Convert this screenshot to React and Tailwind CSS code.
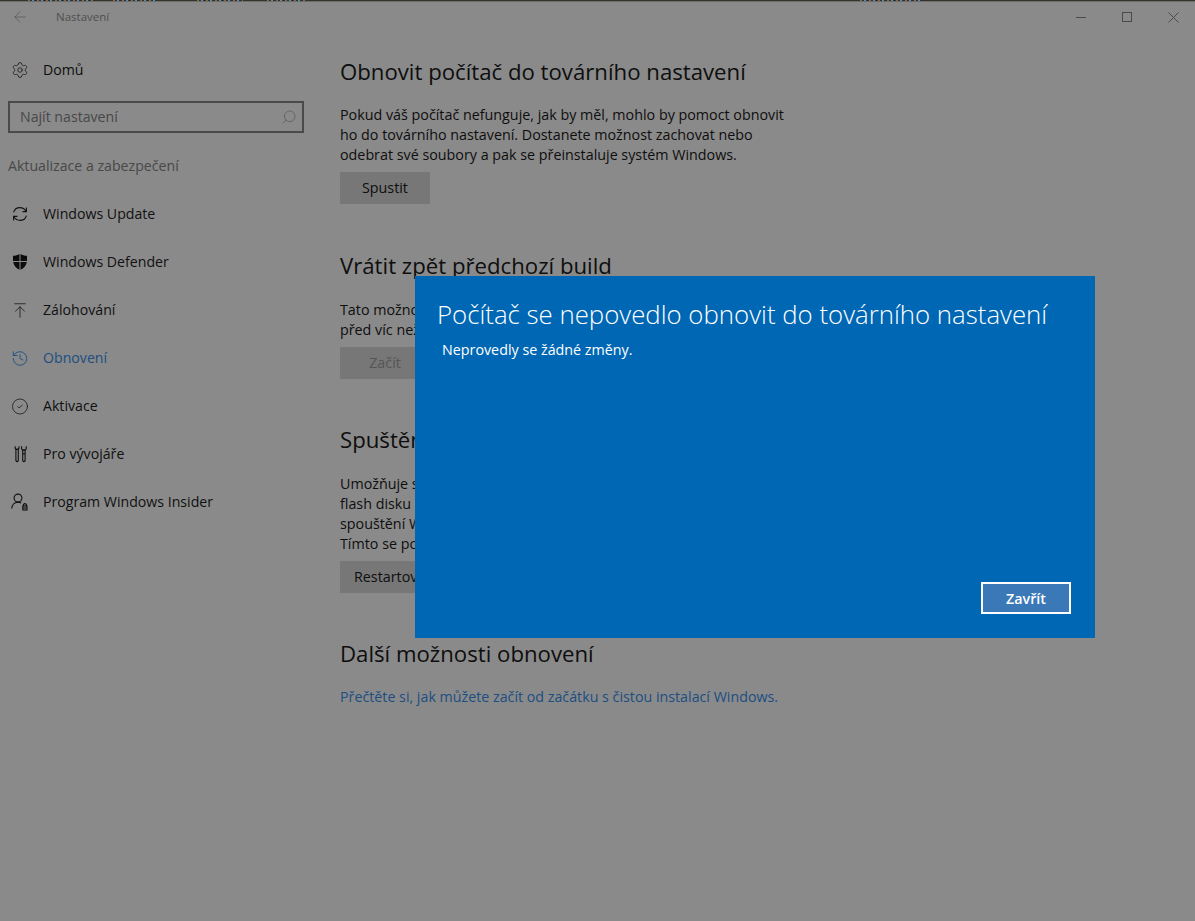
import { ArrowLeft, Search, Settings, ArrowUpToLine, History, CircleCheck } from 'lucide-react';

const FONT = "font-['Open_Sans','Noto_Sans',sans-serif]";

function UpdateIcon() {
  return (
    <svg width="18" height="18" viewBox="0 0 18 18" fill="none" stroke="#111" strokeWidth="1.1">
      <path d="M2.6 7.4 C3.4 4.4 6 2.6 9 2.6 C11.6 2.6 13.6 3.8 15.2 6.2" />
      <path d="M15.4 2.6 V6.6 H11.6" />
      <path d="M15.4 10.6 C14.6 13.6 12 15.4 9 15.4 C6.4 15.4 4.4 14.2 2.8 11.8" />
      <path d="M2.6 15.4 V11.4 H6.4" />
    </svg>
  );
}

function ShieldIcon() {
  return (
    <svg width="18" height="18" viewBox="0 0 18 18" fill="#0c0c0c">
      <path d="M2 2.8 C4.4 2.8 6.8 2.2 8.5 1 V8 H2 Z" />
      <path d="M9.5 1 C11.2 2.2 13.6 2.8 16 2.8 V8 H9.5 Z" />
      <path d="M2.2 9 H8.5 V16.8 C5.2 15.4 2.8 12.8 2.2 9 Z" />
      <path d="M9.5 9 H15.8 C15.2 12.8 12.8 15.4 9.5 16.8 Z" />
    </svg>
  );
}

function DevIcon() {
  return (
    <svg width="18" height="18" viewBox="0 0 18 18" fill="none" stroke="#111" strokeWidth="1.1">
      <path d="M4.2 1.2 V3.2 L5.4 4.4 M8 1.2 V3.2 L6.8 4.4" />
      <path d="M4.9 4.4 H7.3 V15.6 Q6.1 17.6 4.9 15.6 Z" />
      <path d="M10.6 1.2 V3.6 Q10.6 5 11.9 5 H13.9 Q15.2 5 15.2 3.6 V1.2" />
      <path d="M11.7 5 H14.1 V15.6 Q12.9 17.6 11.7 15.6 Z" />
      <path d="M11.7 8.8 H14.1" />
    </svg>
  );
}

function InsiderIcon() {
  return (
    <svg width="18" height="18" viewBox="0 0 18 18" fill="none" stroke="#111" strokeWidth="1.1">
      <circle cx="7" cy="5" r="3.9" />
      <path d="M.8 15.5 C1 11.5 3.5 9.4 7 9.2 C8.4 9.2 9.4 9.5 10.2 10" />
      <rect x="11.8" y="13" width="4.2" height="4" />
      <path d="M12.4 13 V11.6 Q13.9 9.6 15.4 11.6 V13" />
      <path d="M11.8 15 H16" />
    </svg>
  );
}

const NAV = [
  { label: 'Windows Update', icon: <UpdateIcon /> },
  { label: 'Windows Defender', icon: <ShieldIcon /> },
  { label: 'Zálohování', icon: <ArrowUpToLine size={19} strokeWidth={1} color="#111" /> },
  { label: 'Obnovení', icon: <History size={19} strokeWidth={1.2} color="#1c4e82" />, active: true },
  { label: 'Aktivace', icon: <CircleCheck size={19} strokeWidth={1} color="#111" /> },
  { label: 'Pro vývojáře', icon: <DevIcon /> },
  { label: 'Program Windows Insider', icon: <InsiderIcon /> },
];

// x ranges of the text tops peeking out along the upper window edge
const SPECKLES = [
  { gap: 'w-[28px]', run: 'w-[65px]' },
  { gap: 'w-[20px]', run: 'w-[44px]' },
  { gap: 'w-[40px]', run: 'w-[46px]' },
  { gap: 'w-[24px]', run: 'w-[38px]' },
  { gap: 'w-[555px]', run: 'w-[62px]' },
];

function NavItem({ label, icon, active }) {
  return (
    <div className={`h-12 flex items-center pl-[11px] gap-[14px] ${active ? 'text-[#1c4e82]' : 'text-[#111111]'}`}>
      <span className="w-[18px] h-[18px] flex items-center justify-center">{icon}</span>
      <span>{label}</span>
    </div>
  );
}

function Heading({ children }) {
  return <h2 className="text-[22.2px] leading-[30px] text-[#0e0e0e] whitespace-nowrap">{children}</h2>;
}

function GrayButton({ children, disabled }) {
  return (
    <div className={`w-fit min-w-[90px] h-8 px-[14px] flex items-center justify-center whitespace-nowrap bg-[#777777] ${disabled ? 'text-[#555555]' : 'text-[#0e0e0e]'}`}>
      {children}
    </div>
  );
}

export default function App() {
  return (
    <div className={`relative w-[1195px] h-[921px] overflow-hidden bg-[#8a8a8a] text-[14.3px] leading-5 ${FONT}`}>
      {/* top edge of the window */}
      <div className="h-px bg-[#34342e] flex">
        {SPECKLES.map((s) => (
          <div key={s.gap} className="contents">
            <div className={s.gap} />
            <div className={`${s.run} bg-[repeating-linear-gradient(90deg,#8a6a45_0_2px,#2f2f2f_2px_4px,#5a8fb0_4px_6px,#2f2f2f_6px_9px)]`} />
          </div>
        ))}
      </div>
      <div className="h-px bg-[#6e6e6a]" />

      {/* title bar */}
      <div className="h-[30px] flex items-center">
        <div className="w-[40px] flex justify-center">
          <ArrowLeft size={18} strokeWidth={1} color="#555555" />
        </div>
        <span className="ml-4 text-[11.5px] text-[#4f4f4f]">Nastavení</span>
        <div className="ml-auto flex items-center mr-[-1px]">
          <div className="w-[46px] flex justify-center"><div className="w-[10px] h-px bg-[#4a4a4a]" /></div>
          <div className="w-[46px] flex justify-center"><div className="w-[10px] h-[10px] border border-[#4a4a4a]" /></div>
          <div className="w-[46px] flex justify-center">
            <svg width="11" height="11" viewBox="0 0 11 11" stroke="#4a4a4a" strokeWidth="1"><path d="M.5 .5 L10.5 10.5 M10.5 .5 L.5 10.5" /></svg>
          </div>
        </div>
      </div>

      <div className="flex">
        {/* sidebar */}
        <aside className="w-[320px] shrink-0 text-[14.15px]">
          <div className="h-[36px] mt-5 flex items-center pl-[11px] gap-[14px] text-[#0e0e0e]">
            <Settings size={18} strokeWidth={1} color="#111" />
            <span>Domů</span>
          </div>
          <div className="ml-2 mt-[13px] w-[296px] h-[32px] border-2 border-[#4a4a4a] flex items-center justify-between pl-[10px] pr-[5px] text-[#484848]">
            <span>Najít nastavení</span>
            <Search size={16} strokeWidth={1} className="-scale-x-100" color="#555555" />
          </div>
          <div className="ml-2 mt-[23px] mb-[14px] text-[#484848]">Aktualizace a zabezpečení</div>
          {NAV.map((item) => <NavItem key={item.label} {...item} />)}
        </aside>

        {/* main column */}
        <main className="pl-5 text-[#0e0e0e]">
          <div className="mt-[25px]"><Heading>Obnovit počítač do továrního nastavení</Heading></div>
          <p className="mt-[18px] w-[450px]">
            Pokud váš počítač nefunguje, jak by měl, mohlo by pomoct obnovit ho do továrního nastavení. Dostanete možnost zachovat nebo odebrat své soubory a pak se přeinstaluje systém Windows.
          </p>
          <div className="mt-[7px]"><GrayButton>Spustit</GrayButton></div>

          <div className="mt-[47px]"><Heading>Vrátit zpět předchozí build</Heading></div>
          <p className="mt-[19px] whitespace-nowrap">Tato možnost už není k dispozici, protože</p>
          <p className="whitespace-nowrap">před víc než 10 dny</p>
          <div className="mt-[7px]"><GrayButton disabled>Začít</GrayButton></div>

          <div className="mt-[46px]"><Heading>Spuštění s upřesněným nastavením</Heading></div>
          <p className="mt-[19px] whitespace-nowrap">Umožňuje spuštění ze zařízení nebo disku</p>
          <p className="whitespace-nowrap">flash disku nebo disku DVD)</p>
          <p className="whitespace-nowrap">spouštění Windows</p>
          <p className="whitespace-nowrap">Tímto se počítač restartuje</p>
          <div className="mt-[7px]"><GrayButton>Restartovat</GrayButton></div>

          <div className="mt-[46px]"><Heading>Další možnosti obnovení</Heading></div>
          <p className="mt-[18px] text-[14.25px] text-[#1c4e82] whitespace-nowrap">Přečtěte si, jak můžete začít od začátku s čistou instalací Windows.</p>
        </main>
      </div>

      {/* error dialog */}
      <div className="absolute left-[415px] top-[276px] w-[680px] h-[362px] bg-[#0067b4] text-white flex flex-col">
        <h1 className="mt-5 ml-[22px] text-[25.8px] font-light leading-9 whitespace-nowrap">Počítač se nepovedlo obnovit do továrního nastavení</h1>
        <p className="mt-2 ml-[27px]">Neprovedly se žádné změny.</p>
        <div className="mt-auto mb-6 mr-6 self-end w-[90px] h-8 pt-px border-2 border-white bg-[#3b78b7] flex items-center justify-center font-semibold">
          Zavřít
        </div>
      </div>
    </div>
  );
}
